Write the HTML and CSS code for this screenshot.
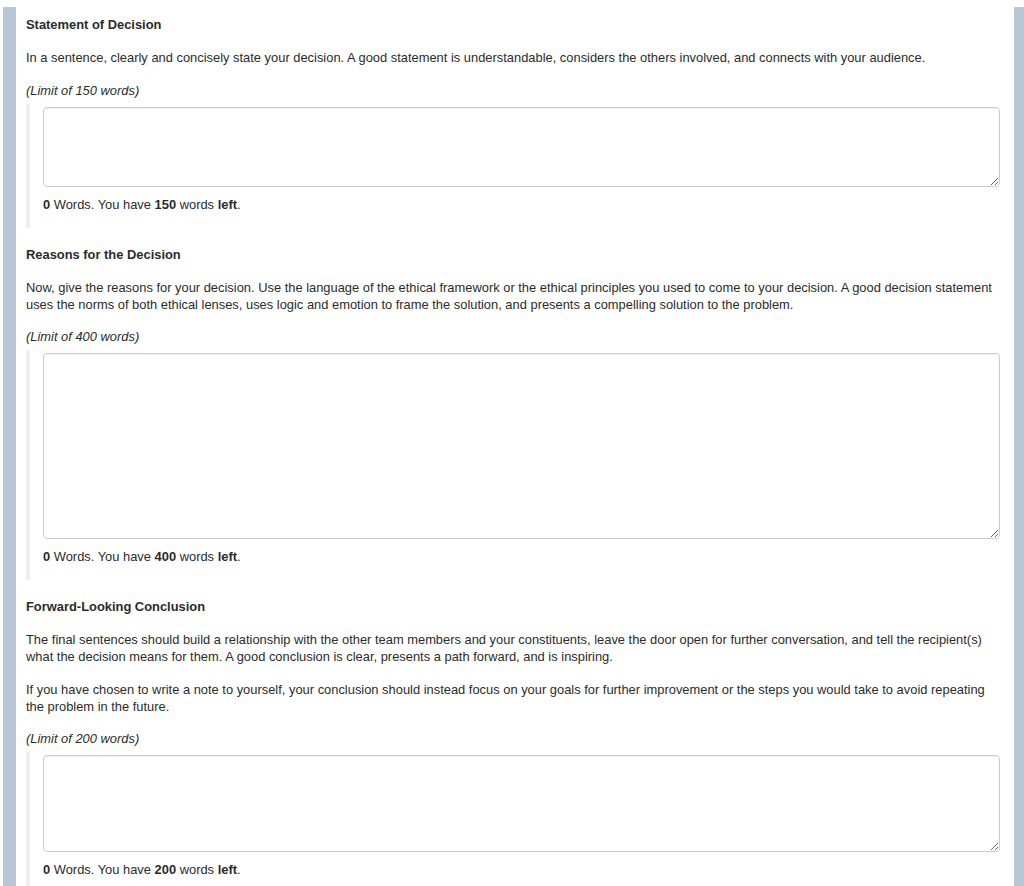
FILE: index.html
```html
<!DOCTYPE html>
<html>
<head>
<meta charset="utf-8">
<link rel="stylesheet" href="styles.css">
</head>
<body>
<div class="frame">
  <div class="panel">
    <section class="question">
      <h4 class="q-title">Statement of Decision</h4>
      <p class="q-text">In a sentence, clearly and concisely state your decision. A good statement is understandable, considers the others involved, and connects with your audience.</p>
      <p class="q-limit">(Limit of 150 words)</p>
      <div class="answer">
        <textarea class="answer-box box-150"></textarea>
        <div class="count"><b>0</b> Words. You have <b>150</b> words <b>left</b>.</div>
      </div>
    </section>
    <section class="question">
      <h4 class="q-title">Reasons for the Decision</h4>
      <p class="q-text">Now, give the reasons for your decision. Use the language of the ethical framework or the ethical principles you used to come to your decision. A good decision statement uses the norms of both ethical lenses, uses logic and emotion to frame the solution, and presents a compelling solution to the problem.</p>
      <p class="q-limit">(Limit of 400 words)</p>
      <div class="answer">
        <textarea class="answer-box box-400"></textarea>
        <div class="count"><b>0</b> Words. You have <b>400</b> words <b>left</b>.</div>
      </div>
    </section>
    <section class="question">
      <h4 class="q-title">Forward-Looking Conclusion</h4>
      <p class="q-text">The final sentences should build a relationship with the other team members and your constituents, leave the door open for further conversation, and tell the recipient(s) what the decision means for them. A good conclusion is clear, presents a path forward, and is inspiring.</p>
      <p class="q-text">If you have chosen to write a note to yourself, your conclusion should instead focus on your goals for further improvement or the steps you would take to avoid repeating the problem in the future.</p>
      <p class="q-limit">(Limit of 200 words)</p>
      <div class="answer">
        <textarea class="answer-box box-200"></textarea>
        <div class="count"><b>0</b> Words. You have <b>200</b> words <b>left</b>.</div>
      </div>
    </section>
  </div>
</div>
</body>
</html>
```

FILE: styles.css
```css
html, body {
  margin: 0;
  padding: 0;
  background: #ffffff;
}
body {
  font-family: "Liberation Sans", Arial, Helvetica, sans-serif;
  font-size: 12.9px;
  line-height: 17px;
  color: #2b2b2b;
}
.frame {
  margin: 7px 0 0 3px;
  background: #b7c7d5;
  padding: 0 10px 0 13px;
}
.panel {
  background: #ffffff;
  padding: 9px 14px 20px 10px;
}
.question {
  margin: 0 0 18px 0;
}
.q-title {
  margin: 0 0 16px 0;
  font-size: 12.9px;
  font-weight: bold;
  line-height: 17px;
}
.q-text {
  margin: 0 0 15.6px 0;
}
.q-limit {
  margin: 0 0 5px 0;
  font-style: italic;
}
.answer {
  border-left: 4px solid #eeeeee;
  padding: 3px 0 15px 13px;
}
.answer-box {
  display: block;
  box-sizing: border-box;
  width: 100%;
  margin: 0;
  border: 1px solid #cccccc;
  border-radius: 4px;
  box-shadow: inset 0 1px 1px rgba(0,0,0,0.05);
  background: #ffffff;
  font-family: inherit;
  font-size: 13px;
  resize: vertical;
}
.box-150 { height: 80px; }
.box-400 { height: 186px; }
.box-200 { height: 97px; }
.count {
  margin-top: 9px;
}
.count b {
  font-weight: bold;
}
```
